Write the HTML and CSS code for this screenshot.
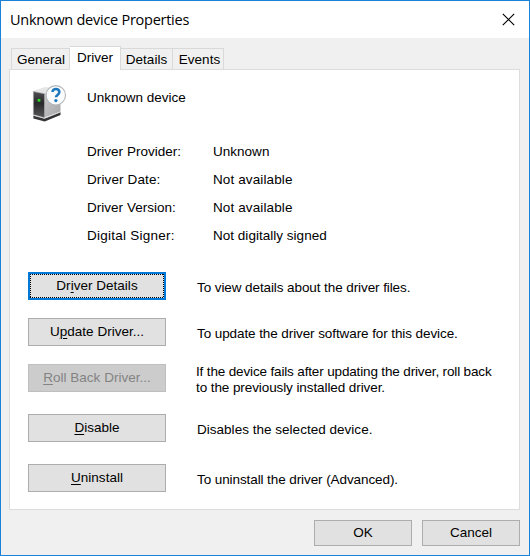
FILE: index.html
```
<!DOCTYPE html>
<html lang="en">
<head>
<meta charset="utf-8">
<title>Unknown device Properties</title>
<link rel="stylesheet" href="styles.css">
</head>
<body>
<div class="window">
  <header class="titlebar">
    <h1>Unknown device Properties</h1>
    <svg class="close" width="13" height="13" viewBox="0 0 13 13"><path d="M.8.8l11.4 11.4M12.2.8L.8 12.2" stroke="#000" stroke-width="1.15" fill="none"/></svg>
  </header>
  <nav class="tabs">
    <div class="tab general"><span>General</span></div>
    <div class="tab active"><span>Driver</span></div>
    <div class="tab details"><span>Details</span></div>
    <div class="tab events"><span>Events</span></div>
  </nav>
  <main class="panel">
    <section class="device">
      <svg class="device-icon" width="36" height="40" viewBox="0 0 36 40">
        <defs>
          <linearGradient id="side" x1="0" y1="0" x2="1" y2="1"><stop offset="0" stop-color="#cbcbcd"/><stop offset="1" stop-color="#a6a6a9"/></linearGradient>
          <linearGradient id="front" x1="0" y1="0" x2="0" y2="1"><stop offset="0" stop-color="#505052"/><stop offset=".45" stop-color="#29292b"/><stop offset="1" stop-color="#58585a"/></linearGradient>
        </defs>
        <path d="M1 7L13 3l14 1.500-14.500 5z" fill="#e6e6e7"/>
        <path d="M12.500 9.500L28.500 5v22.500l-16 6z" fill="url(#side)"/>
        <path d="M1.400 7.500l11.100 2.300v24L1.400 30.800z" fill="url(#front)" stroke="#a0a0a2" stroke-width=".7"/>
        <path d="M1.400 31.500l11.100 3L28.500 28v3L12.700 37.500 1.400 34.500z" fill="#343436"/>
        <path d="M1.400 31.300l11.100 3L28.500 28" fill="none" stroke="#ddd" stroke-width=".8"/>
        <rect x="5.700" y="15" width="2.600" height="2.600" fill="#27e31d"/>
        <circle cx="23.800" cy="11.300" r="9.700" fill="#fafcfd" stroke="#b3b7ba" stroke-width="1.100"/>
        <path d="M20.500 8c0-4.200 6.800-4 6.800.1 0 3-3.300 2.700-3.300 5.200" fill="none" stroke="#1e78bd" stroke-width="2.600"/>
        <circle cx="23.900" cy="16.600" r="1.600" fill="#1e78bd"/>
      </svg>
      <h2>Unknown device</h2>
    </section>
    <dl class="facts">
      <dt>Driver Provider:</dt><dd>Unknown</dd>
      <dt class="wide">Driver Date:</dt><dd class="wide">Not available</dd>
      <dt>Driver Version:</dt><dd class="wide">Not available</dd>
      <dt class="wider">Digital Signer:</dt><dd>Not digitally signed</dd>
    </dl>
    <section class="actions">
      <button class="focused"><span>Dr<u>i</u>ver Details</span></button><p>To view details about the driver files.</p>
      <button><span>U<u>p</u>date Driver...</span></button><p>To update the driver software for this device.</p>
      <button disabled><span><u>R</u>oll Back Driver...</span></button><p class="two-line"><span class="dense">If the device fails after updating the driver, roll back</span><br>to the previously installed driver.</p>
      <button><span><u>D</u>isable</span></button><p class="loose">Disables the selected device.</p>
      <button><span><u>U</u>ninstall</span></button><p>To uninstall the driver (Advanced).</p>
    </section>
  </main>
  <footer class="footer">
    <button><span>OK</span></button>
    <button><span>Cancel</span></button>
  </footer>
</div>
</body>
</html>
```
FILE: styles.css
```
* { box-sizing: border-box; }
body { margin: 0; }
h1, h2, p, dl, dd { margin: 0; font-weight: normal; }
.window {
  width: 530px;
  height: 556px;
  border: 1px solid #1a82d8;
  background: #f0f0f0;
  color: #000;
  font: 13.5px/16px "Liberation Sans", Arial, sans-serif;
  letter-spacing: .02px;
  white-space: nowrap;
}
.titlebar {
  height: 37px;
  padding: 0 14px 0 9px;
  display: flex;
  align-items: center;
  justify-content: space-between;
  background: #fff;
}
h1 { font: 14.5px/20px "Open Sans", "Noto Sans", sans-serif; letter-spacing: -.26px; }
.tabs {
  height: 31px;
  padding: 0 10px;
  display: flex;
  align-items: flex-end;
}
.tab {
  height: 21px;
  padding: 3px 0 0 1px;
  border: 1px solid #d9d9d9;
  border-width: 1px 1px 0 0;
  text-align: center;
}
.general { width: 59px; border-left-width: 1px; padding-left: 1px; }
.active {
  width: 51px;
  height: 24px;
  margin-bottom: -1px;
  padding-left: 0;
  background: #fff;
  z-index: 1;
}
.details { width: 52px; padding-left: 0; }
.events { width: 51px; padding-left: 3px; }
.panel {
  width: 511px;
  height: 441px;
  margin-left: 8px;
  border: 1px solid #dcdcdc;
  background: #fff;
}
.device {
  height: 74px;
  padding: 14px 0 0 22px;
  display: flex;
}
h2 { font: inherit; letter-spacing: -.03px; margin: 6px 0 0 19px; }
.facts {
  padding-left: 77px;
  display: grid;
  grid-template-columns: 126px 1fr;
  grid-auto-rows: 28px;
}
.wide { letter-spacing: .12px; }
.wider { letter-spacing: .25px; }
.actions {
  padding: 16px 0 0 18px;
  display: grid;
  grid-template-columns: 138px 1fr;
  grid-template-rows: 28px 28px 32px 32px 28px;
  align-items: start;
  row-gap: 18px;
  column-gap: 31px;
}
button {
  height: 28px;
  padding: 0 0 1px;
  border: 1px solid #adadad;
  border-radius: 0;
  background: #e1e1e1;
  color: #000;
  font: inherit;
  letter-spacing: inherit;
}
button:disabled { background: #ccc; border-color: #bfbfbf; color: #838383; }
.focused {
  border: 2px solid #0078d7;
  background:
    repeating-linear-gradient(90deg, #000 0 1px, transparent 1px 2px) top / 100% 1px no-repeat,
    repeating-linear-gradient(90deg, #000 0 1px, transparent 1px 2px) bottom / 100% 1px no-repeat,
    repeating-linear-gradient(#000 0 1px, transparent 1px 2px) left / 1px 100% no-repeat,
    repeating-linear-gradient(#000 0 1px, transparent 1px 2px) right / 1px 100% no-repeat,
    #e1e1e1;
}
u { text-underline-offset: 2px; text-decoration-thickness: 1px; }
.actions p { padding-top: 8px; letter-spacing: -.09px; }
.actions .loose { letter-spacing: .02px; }
.actions .two-line { padding-top: 0; margin-left: -1px; }
.dense { letter-spacing: -.15px; }
.footer {
  padding: 10px 9px 0;
  display: flex;
  justify-content: flex-end;
  gap: 10px;
}
.footer button { width: 98px; height: 26px; }
```
